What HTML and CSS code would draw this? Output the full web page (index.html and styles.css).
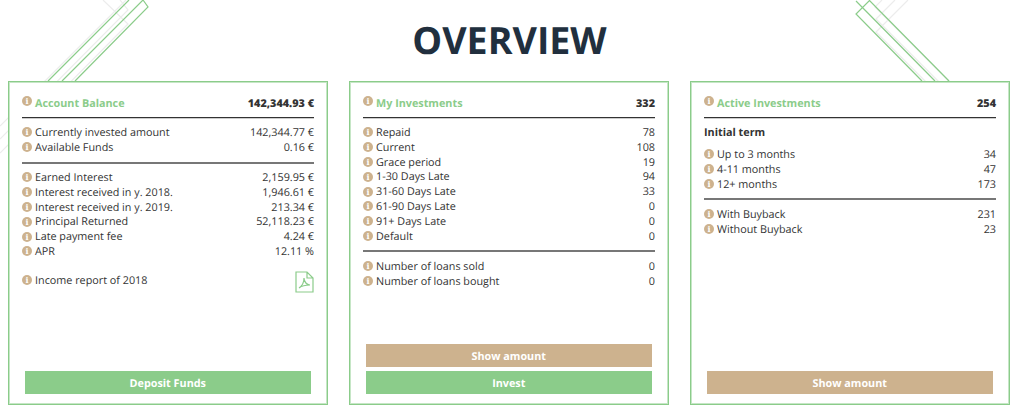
FILE: index.html
```html
<!DOCTYPE html>
<html lang="en">
<head>
  <meta charset="UTF-8" />
  <title>Overview</title>
  <link rel="stylesheet" href="styles.css">
</head>
<body>
  <svg class="deco" width="1024" height="190" viewBox="0 0 1024 190">
    <g class="deco__grey">
      <path d="M45 81 L126 0 M0 126 L45 81 M103 0 L128 24 L0 153 M120 0 L128 10 L0 139" />
      <path d="M908 0 L876 32 L945 101 M895 0 L876 19 L958 101 M882 0 L875 7 L969 101" />
    </g>
    <g class="deco__green">
      <path d="M48 81 L129 0 M62 81 L143 0 L148 7 L75 81" />
      <path d="M856 1 L935 81 M869 0 L949 81 M922 81 L856 14 L870 0" />
    </g>
  </svg>

  <main class="overview">
    <h1 class="title">OVERVIEW</h1>

    <div class="cards">
      <section class="card">
        <div class="row row--head">
          <span class="row__label"><i class="info">i</i>Account Balance</span>
          <b>142,344.93 €</b>
        </div>
        <div class="group">
          <div class="row"><span class="row__label"><i class="info">i</i>Currently invested amount</span><span>142,344.77 €</span></div>
          <div class="row"><span class="row__label"><i class="info">i</i>Available Funds</span><span>0.16 €</span></div>
        </div>
        <div class="group">
          <div class="row"><span class="row__label"><i class="info">i</i>Earned Interest</span><span>2,159.95 €</span></div>
          <div class="row"><span class="row__label"><i class="info">i</i>Interest received in y. 2018.</span><span>1,946.61 €</span></div>
          <div class="row"><span class="row__label"><i class="info">i</i>Interest received in y. 2019.</span><span>213.34 €</span></div>
          <div class="row"><span class="row__label"><i class="info">i</i>Principal Returned</span><span>52,118.23 €</span></div>
          <div class="row"><span class="row__label"><i class="info">i</i>Late payment fee</span><span>4.24 €</span></div>
          <div class="row"><span class="row__label"><i class="info">i</i>APR</span><span>12.11 %</span></div>
        </div>
        <div class="row row--report">
          <span class="row__label"><i class="info">i</i>Income report of 2018</span>
          <svg class="pdf" width="19" height="22" viewBox="0 0 19 22">
            <path d="M1 1 H12 L18 7 V21 H1 Z M12 1 V7 H18" />
            <path d="M4 17 C7 15 9 11 9 7 C9 11 12 14 15 14 C12 14 8 14 4 17 Z" />
          </svg>
        </div>
        <div class="actions">
          <a class="btn btn--green">Deposit Funds</a>
        </div>
      </section>

      <section class="card">
        <div class="row row--head">
          <span class="row__label"><i class="info">i</i>My Investments</span>
          <b>332</b>
        </div>
        <div class="group">
          <div class="row"><span class="row__label"><i class="info">i</i>Repaid</span><span>78</span></div>
          <div class="row"><span class="row__label"><i class="info">i</i>Current</span><span>108</span></div>
          <div class="row"><span class="row__label"><i class="info">i</i>Grace period</span><span>19</span></div>
          <div class="row"><span class="row__label"><i class="info">i</i>1-30 Days Late</span><span>94</span></div>
          <div class="row"><span class="row__label"><i class="info">i</i>31-60 Days Late</span><span>33</span></div>
          <div class="row"><span class="row__label"><i class="info">i</i>61-90 Days Late</span><span>0</span></div>
          <div class="row"><span class="row__label"><i class="info">i</i>91+ Days Late</span><span>0</span></div>
          <div class="row"><span class="row__label"><i class="info">i</i>Default</span><span>0</span></div>
        </div>
        <div class="group">
          <div class="row"><span class="row__label"><i class="info">i</i>Number of loans sold</span><span>0</span></div>
          <div class="row"><span class="row__label"><i class="info">i</i>Number of loans bought</span><span>0</span></div>
        </div>
        <div class="actions">
          <a class="btn btn--tan">Show amount</a>
          <a class="btn btn--green">Invest</a>
        </div>
      </section>

      <section class="card">
        <div class="row row--head">
          <span class="row__label"><i class="info">i</i>Active Investments</span>
          <b>254</b>
        </div>
        <div class="group">
          <div class="term">Initial term</div>
          <div class="row"><span class="row__label"><i class="info">i</i>Up to 3 months</span><span>34</span></div>
          <div class="row"><span class="row__label"><i class="info">i</i>4-11 months</span><span>47</span></div>
          <div class="row"><span class="row__label"><i class="info">i</i>12+ months</span><span>173</span></div>
        </div>
        <div class="group">
          <div class="row"><span class="row__label"><i class="info">i</i>With Buyback</span><span>231</span></div>
          <div class="row"><span class="row__label"><i class="info">i</i>Without Buyback</span><span>23</span></div>
        </div>
        <div class="actions">
          <a class="btn btn--tan">Show amount</a>
        </div>
      </section>
    </div>
  </main>
</body>
</html>
```

FILE: styles.css
```css
html, body {
  height: 100%;
}

body {
  margin: 0;
  font-family: 'Open Sans', sans-serif;
  font-size: 10.8px;
  text-rendering: geometricPrecision;
  background-color: #fff;
  color: #333;
  overflow: hidden;
}

.deco {
  position: absolute;
  top: 0;
  left: 0;
}

.deco path {
  fill: none;
  stroke-width: 1.2;
}

.deco__grey path {
  stroke: #ececec;
}

.deco__green path {
  stroke: #8bcc8a;
}

.overview {
  position: relative;
}

.title {
  margin: 0;
  height: 81px;
  padding-right: 5px;
  box-sizing: border-box;
  text-align: center;
  font-size: 37.6px;
  line-height: 81px;
  font-weight: 700;
  color: #212f3e;
}

.cards {
  display: flex;
  gap: 21px;
  padding: 0 14px 0 8px;
}

.card {
  flex: 1;
  display: flex;
  flex-direction: column;
  height: 324px;
  box-sizing: border-box;
  padding: 12px 13px 10px;
  background-color: #fff;
  border: 1px solid #8bcc8a;
  box-shadow: inset 0 0 0 1px #c6e6c6;
}

.row {
  display: flex;
  justify-content: space-between;
  height: 14.8px;
  line-height: 14.8px;
}

.row__label {
  display: flex;
  align-items: center;
  white-space: nowrap;
}

.row--head {
  height: 23px;
  line-height: 19px;
  font-weight: 700;
  border-bottom: 1px solid #333;
  box-shadow: 0 1px #ccc;
  box-sizing: content-box;
}

.row--head .row__label {
  align-items: flex-start;
  color: #8bcc8a;
}

.row--head .info {
  margin-top: 2px;
}

.group {
  padding: 8px 0 6px;
}

.group + .group {
  border-top: 2px solid #777;
  padding-top: 7.5px;
}

.term {
  height: 22px;
  line-height: 14.8px;
  font-weight: 700;
}

.info {
  flex: none;
  width: 10px;
  height: 10px;
  margin: -2px 3px 0 0;
  border-radius: 50%;
  background-color: #cdb28e;
  color: #fff;
  font-family: 'DejaVu Serif', serif;
  font-size: 8px;
  font-style: normal;
  font-weight: 700;
  line-height: 10px;
  text-align: center;
}

.row--report {
  height: 24px;
  margin-top: 8px;
  align-items: flex-start;
}

.pdf {
  margin-top: -2.5px;
}

.pdf path {
  fill: none;
  stroke: #8bcc8a;
  stroke-width: 1.2;
}

.actions {
  margin-top: auto;
  padding: 0 3px 0 2.5px;
  display: flex;
  flex-direction: column;
  gap: 4px;
}

.btn {
  display: block;
  height: 23px;
  line-height: 25px;
  text-align: center;
  color: #fff;
  font-weight: 700;
  cursor: pointer;
}

.btn--green {
  background-color: #8bcc8a;
}

.btn--tan {
  background-color: #cdb28e;
}
```
